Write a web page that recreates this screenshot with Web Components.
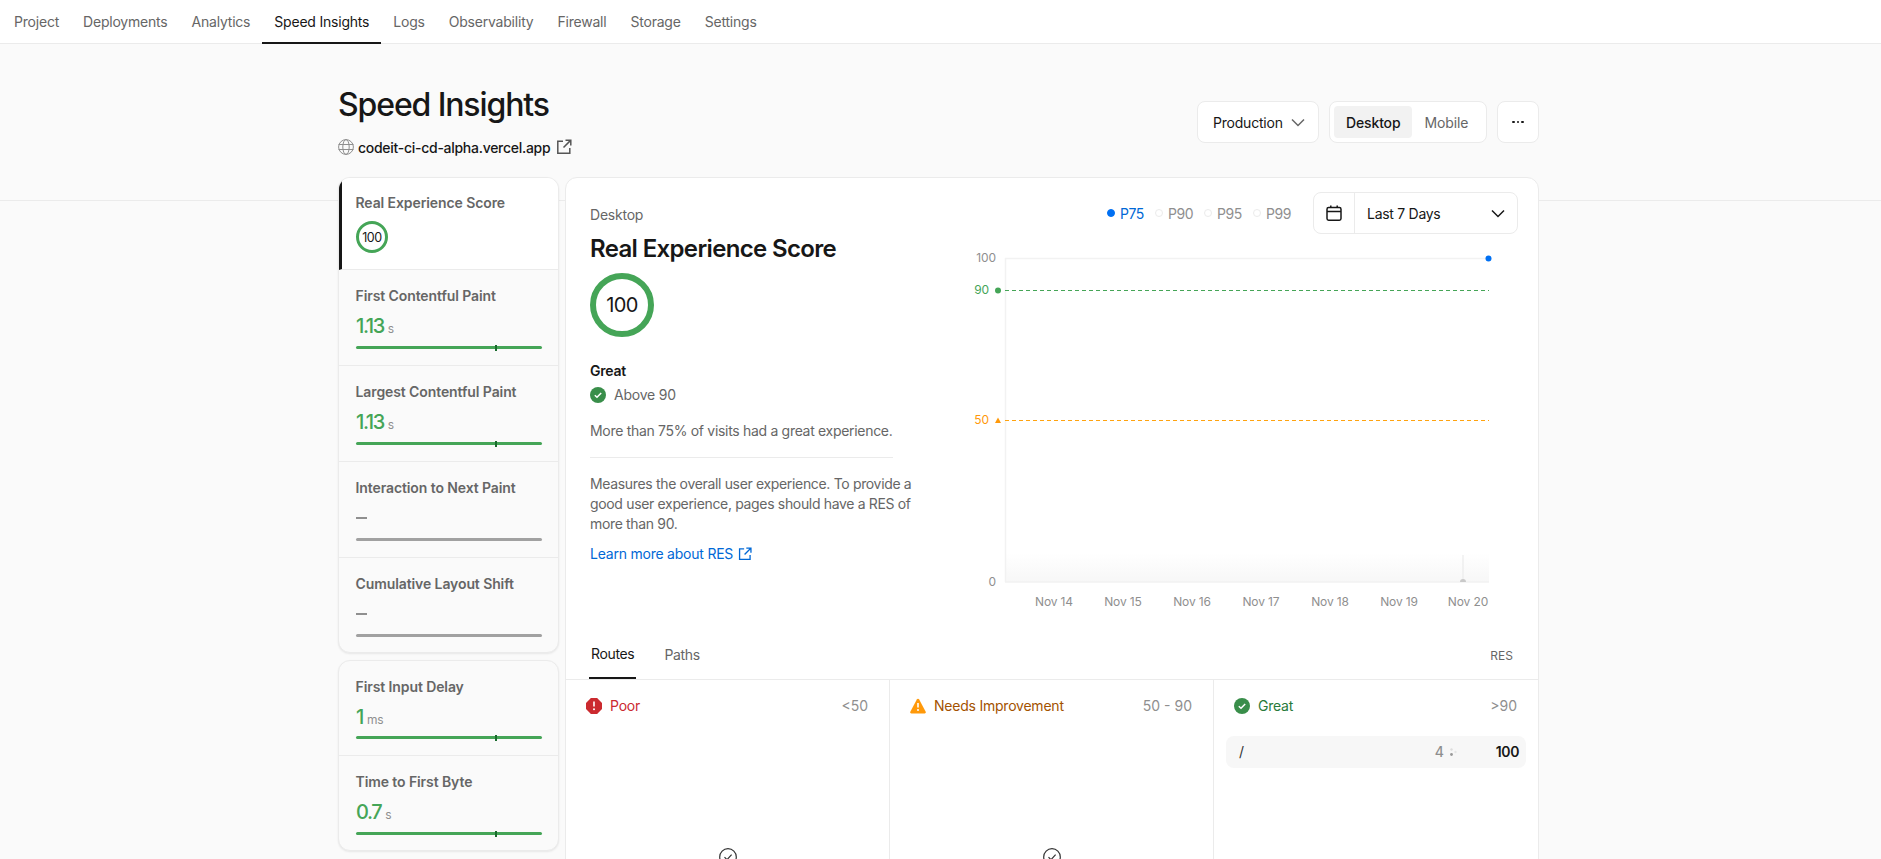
<!DOCTYPE html>
<html lang="en">
<head>
<meta charset="utf-8">
<title>Speed Insights</title>
<style>
  html, body { margin: 0; height: 859px; overflow: hidden; background: #fafafa; }
  body { font-family: Inter, "Liberation Sans", sans-serif; font-size: 14px; color: #171717; letter-spacing: -0.01em; }
</style>
</head>
<body>
<app-nav></app-nav>
<page-head></page-head>
<div id="content" style="display:flex;gap:6px;align-items:flex-start;margin:-24px 342px 0 338px">
  <metric-list>
    <metric-group>
      <metric-item label="Real Experience Score" score="100" active></metric-item>
      <metric-item label="First Contentful Paint" value="1.13" unit="s"></metric-item>
      <metric-item label="Largest Contentful Paint" value="1.13" unit="s"></metric-item>
      <metric-item label="Interaction to Next Paint"></metric-item>
      <metric-item label="Cumulative Layout Shift"></metric-item>
    </metric-group>
    <metric-group>
      <metric-item label="First Input Delay" value="1" unit="ms"></metric-item>
      <metric-item label="Time to First Byte" value="0.7" unit="s"></metric-item>
    </metric-group>
  </metric-list>
  <main-panel></main-panel>
</div>

<script>
const icons = {
  chevron: `<svg width="16" height="16" viewBox="0 0 16 16" fill="none" stroke="currentColor" stroke-width="1.5"><path d="M2 5.5l6 6 6-6"/></svg>`,
  external: `<svg width="16" height="16" viewBox="0 0 16 16" fill="none" stroke="currentColor" stroke-width="1.5"><path d="M7 2.2H1.8v12h12V9"/><path d="M9.5 1.2h5.3v5.3M14.6 1.4L7.5 8.5"/></svg>`,
  globe: `<svg width="16" height="16" viewBox="0 0 16 16" fill="none" stroke="#8f8f8f" stroke-width="1"><circle cx="8" cy="8" r="7.4"/><ellipse cx="8" cy="8" rx="3.2" ry="7.4"/><path d="M.6 5.5h14.8M.6 10.5h14.8"/></svg>`,
  calendar: `<svg width="16" height="16" viewBox="0 0 16 16" fill="none" stroke="currentColor" stroke-width="1.5"><rect x="1" y="2.6" width="14" height="12.6" rx="1.6"/><path d="M1 6.6h14M4.8 .4v2.4M11.2 .4v2.4"/></svg>`,
  great: `<svg width="16" height="16" viewBox="0 0 16 16"><circle cx="8" cy="8" r="8" fill="#398e4a"/><path d="M4.8 8.2l2.2 2.1 4.2-4.3" fill="none" stroke="#fff" stroke-width="1.5"/></svg>`,
  poor: `<svg width="16" height="16" viewBox="0 0 16 16"><path d="M4.9 0h6.2L16 4.9v6.2L11.1 16H4.9L0 11.1V4.9z" fill="#cb2a2f"/><path d="M8 3.6v5" stroke="#fff" stroke-width="1.6"/><circle cx="8" cy="11.3" r="1" fill="#fff"/></svg>`,
  warn: `<svg width="16" height="16" viewBox="0 0 16 16"><path d="M8 .8c.5 0 .9.3 1.2.8l6.5 12.2c.4.8-.1 1.6-1 1.6H1.3c-.9 0-1.4-.8-1-1.6L6.8 1.6C7.1 1.1 7.5.8 8 .8z" fill="#ff990a"/><path d="M8 5v4.6" stroke="#fff" stroke-width="1.6"/><circle cx="8" cy="12" r="1" fill="#fff"/></svg>`,
  checkOutline: `<svg width="18" height="18" viewBox="0 0 18 18" fill="none" stroke="#333" stroke-width="1.2"><circle cx="9" cy="9" r="8.3"/><path d="M5.5 9.2l2.5 2.5 4.6-5"/></svg>`,
};

// every element here just has a fixed shadow template
function simpleElement(name, html) {
  const tpl = document.createElement('template');
  tpl.innerHTML = html;
  customElements.define(name, class extends HTMLElement {
    connectedCallback() {
      if (this.shadowRoot) return;
      this.attachShadow({ mode: 'open' }).appendChild(tpl.content.cloneNode(true));
    }
  });
}

const navItems = ['Project', 'Deployments', 'Analytics', 'Speed Insights', 'Logs', 'Observability', 'Firewall', 'Storage', 'Settings'];

simpleElement('app-nav', `
  <style>
    :host { display: flex; height: 43px; background: #fff; border-bottom: 1px solid #ebebeb; padding-left: 2px; font-size: 14px; letter-spacing: -0.015em; }
    a { display: flex; align-items: center; padding: 0 12px 1px; color: #666; box-sizing: border-box; height: 44px; }
    a.active { color: #171717; border-bottom: 2px solid #171717; padding-bottom: 0; }
  </style>
  ${navItems.map((n) => `<a class="${n === 'Speed Insights' ? 'active' : ''}">${n}</a>`).join('')}
`);

simpleElement('page-head', `
  <style>
    :host { display: flex; justify-content: space-between; height: 157px; box-sizing: border-box; border-bottom: 1px solid #ebebeb; padding: 41px 342px 0 338px; }
    h1 { margin: 0; font-size: 32px; line-height: 40px; font-weight: 500; letter-spacing: -0.035em; color: #171717; }
    .site { display: flex; align-items: center; gap: 4px; margin-top: 12px; font-weight: 500; font-size: 14px; height: 20px; letter-spacing: -0.02em; }
    .site .ext { display: flex; margin-left: 2px; color: #555; }
    .tools { display: flex; gap: 10px; margin-top: 16px; height: 42px; }
    .box { display: flex; align-items: center; background: #fff; border: 1px solid #ebebeb; border-radius: 8px; box-sizing: border-box; height: 42px; }
    .prod { width: 122px; padding-left: 15px; gap: 7px; letter-spacing: -0.015em; }
    .prod svg { color: #666; }
    .seg { width: 158px; padding: 4px; }
    .seg span { display: flex; align-items: center; height: 32px; padding: 0 12px; color: #666; }
    .seg .on { background: #f2f2f2; border-radius: 4px; color: #171717; font-weight: 500; }
    .more { width: 42px; justify-content: center; gap: 2px; }
    .more i { width: 2.5px; height: 2.5px; border-radius: 50%; background: #171717; }
  </style>
  <div>
    <h1>Speed Insights</h1>
    <div class="site">${icons.globe}<span>codeit-ci-cd-alpha.vercel.app</span><span class="ext">${icons.external}</span></div>
  </div>
  <div class="tools">
    <div class="box prod"><span>Production</span>${icons.chevron}</div>
    <div class="box seg"><span class="on">Desktop</span><span>Mobile</span></div>
    <div class="box more"><i></i><i></i><i></i></div>
  </div>
`);

simpleElement('metric-list', `
  <style>:host { display: flex; flex-direction: column; gap: 7px; width: 221px; flex: none; }</style>
  <slot></slot>
`);

simpleElement('metric-group', `
  <style>
    :host { display: block; background: #fafafa; border: 1px solid #ebebeb; border-radius: 12px; overflow: hidden; box-shadow: 0 1px 2px rgba(0,0,0,.08); }
    ::slotted(metric-item:not(:last-child)) { border-bottom: 1px solid #ebebeb; }
  </style>
  <slot></slot>
`);

class MetricItem extends HTMLElement {
  connectedCallback() {
    const label = this.getAttribute('label');
    const value = this.getAttribute('value');
    const unit = this.getAttribute('unit');
    const score = this.getAttribute('score');
    let body;
    if (score) {
      body = `<div class="ring">${score}</div>`;
    } else {
      const num = value
        ? `<span class="num">${value}</span><span class="unit">${unit}</span>`
        : `<span class="dash"></span>`;
      body = `<div class="val">${num}</div><div class="bar ${value ? 'good' : ''}">${value ? '<i></i>' : ''}</div>`;
    }
    this.attachShadow({ mode: 'open' }).innerHTML = `
      <style>
        :host { display: block; box-sizing: border-box; height: 96px; padding: 16px 16px 0 17px; }
        :host(:first-child) { height: 95px; }
        :host(:first-child) .bar { margin-top: 5px; }
        :host(:last-child) { height: 94px; }
        :host([active]) { height: 92px; background: #fff; border-left: 3px solid #171717; padding-left: 14px; padding-top: 15px; }
        .label { font-weight: 600; color: #666; line-height: 20px; font-size: 14px; letter-spacing: -0.007em; margin-left: -0.5px; }
        .ring { width: 32px; height: 32px; margin-top: 8px; box-sizing: border-box; border: 3px solid #45a557; border-radius: 50%; display: flex; align-items: center; justify-content: center; font-size: 12.5px; letter-spacing: -0.03em; color: #171717; }
        .val { display: flex; align-items: baseline; height: 28px; margin-top: 6px; line-height: 28px; }
        .num { font-size: 20px; color: #45a557; letter-spacing: -0.07em; font-weight: 500; }
        .unit { font-size: 12px; color: #8f8f8f; margin-left: 4px; }
        .dash { width: 11px; height: 2px; background: #8f8f8f; margin-top: 13px; }
        .bar { position: relative; width: 186px; height: 3px; border-radius: 2px; margin-top: 6px; background: #a1a1a1; }
        .bar.good { background: #45a557; }
        .bar i { position: absolute; left: 139px; top: -1px; width: 2px; height: 6px; background: #1a6b2d; }
      </style>
      <div class="label">${label}</div>
      ${body}`;
  }
}
customElements.define('metric-item', MetricItem);

simpleElement('score-panel', `
  <style>
    :host { display: block; width: 330px; padding: 27px 0 0 24px; color: #666; font-size: 14px; line-height: 20px; flex: none; letter-spacing: -0.016em; }
    .dev { height: 20px; color: #666; }
    h2 { margin: 8px 0 0; font-size: 24px; line-height: 32px; font-weight: 600; color: #171717; letter-spacing: -0.027em; }
    .ring { width: 64px; height: 64px; margin-top: 8px; box-sizing: border-box; border: 6px solid #45a557; border-radius: 50%; display: flex; align-items: center; justify-content: center; font-size: 20px; color: #171717; letter-spacing: -0.03em; }
    .great { margin-top: 24px; font-weight: 600; color: #171717; }
    .above { display: flex; align-items: center; gap: 8px; margin-top: 4px; }
    p { margin: 16px 0 0; white-space: nowrap; letter-spacing: -0.022em; }
    hr { border: 0; border-top: 1px solid #ebebeb; margin: 16px 0 0; width: 303px; }
    .desc { margin-top: 16px; width: 330px; white-space: normal; letter-spacing: -0.024em; }
    .learn { display: flex; align-items: center; gap: 5px; margin-top: 10px; color: #0068d6; }
    .learn svg { width: 14px; height: 14px; }
  </style>
  <div class="dev">Desktop</div>
  <h2>Real Experience Score</h2>
  <div class="ring">100</div>
  <div class="great">Great</div>
  <div class="above">${icons.great}<span>Above 90</span></div>
  <p>More than 75% of visits had a great experience.</p>
  <hr>
  <p class="desc">Measures the overall user experience. To provide a good user experience, pages should have a RES of more than 90.</p>
  <div class="learn"><span>Learn more about RES</span>${icons.external}</div>
`);

simpleElement('range-bar', `
  <style>
    :host { display: flex; justify-content: flex-end; align-items: center; gap: 22px; padding: 14px 20px 0 0; font-size: 14px; }
    .pcts { display: flex; gap: 11px; color: #8f8f8f; }
    .pcts span { display: flex; align-items: center; gap: 5px; letter-spacing: -0.03em; }
    .pcts i { width: 8px; height: 8px; border-radius: 50%; border: 1px solid #ebebeb; box-sizing: border-box; }
    .pcts .on { color: #0068d6; }
    .pcts .on i { background: #0070f3; border-color: #0070f3; }
    .picker { display: flex; align-items: center; width: 205px; height: 42px; box-sizing: border-box; border: 1px solid #ebebeb; border-radius: 8px; color: #171717; letter-spacing: -0.02em; }
    .cal { display: flex; justify-content: center; align-items: center; width: 40px; height: 40px; border-right: 1px solid #ebebeb; }
    .txt { flex: 1; padding-left: 12px; }
    .chev { display: flex; margin-right: 11px; }
  </style>
  <div class="pcts">
    <span class="on"><i></i>P75</span><span><i></i>P90</span><span><i></i>P95</span><span><i></i>P99</span>
  </div>
  <div class="picker"><div class="cal">${icons.calendar}</div><div class="txt">Last 7 Days</div><div class="chev">${icons.chevron}</div></div>
`);

const days = [14, 15, 16, 17, 18, 19, 20];

// chart coordinates are the picture itself: origin is at x=964, y=240 on the page
simpleElement('score-chart', `
  <style>
    :host { display: block; height: 380px; margin-top: 6px; }
    svg { display: block; font-family: Inter, "Liberation Sans", sans-serif; font-size: 12px; letter-spacing: -0.01em; }
  </style>
  <svg width="540" height="380" viewBox="0 0 540 380">
    <defs><linearGradient id="fade" x1="0" y1="0" x2="0" y2="1"><stop offset="0" stop-color="#fff"/><stop offset="1" stop-color="#f7f7f7"/></linearGradient></defs>
    <rect x="40" y="313" width="484" height="29" fill="url(#fade)"/>
    <path d="M40.5 342V18.5H524" fill="none" stroke="#f2f2f2" stroke-width="1.5"/>
    <path d="M40 342H524" stroke="#f2f2f2" stroke-width="1.5"/>
    <path d="M40 50.5H524" stroke="#45a557" stroke-dasharray="4 3"/>
    <path d="M40 180.5H524" stroke="#ffa30f" stroke-dasharray="4 3"/>
    <circle cx="523.5" cy="18.5" r="3" fill="#0070f3"/>
    <path d="M498 315v27" stroke="#ebebeb" stroke-width="1.2"/>
    <path d="M495 342c0-2 1-3 3-3s3 1 3 3z" fill="#c9c9c9"/>
    <text x="31" y="22" text-anchor="end" fill="#8f8f8f">100</text>
    <text x="24" y="54" text-anchor="end" fill="#45a557">90</text>
    <circle cx="33" cy="50.5" r="3" fill="#45a557"/>
    <text x="24" y="184" text-anchor="end" fill="#ff990a">50</text>
    <path d="M33 177.5l3 5.5h-6z" fill="#ff990a"/>
    <text x="31" y="346" text-anchor="end" fill="#8f8f8f">0</text>
    ${days.map((d, i) => `<text x="${89 + i * 69}" y="366" text-anchor="middle" fill="#8f8f8f">Nov ${d}</text>`).join('')}
  </svg>
`);

simpleElement('route-tabs', `
  <style>
    :host { display: flex; align-items: flex-end; height: 50px; box-sizing: border-box; padding-left: 23px; border-bottom: 1px solid #ebebeb; font-size: 14px; }
    a { display: flex; align-items: center; height: 49px; box-sizing: border-box; padding: 0 2px; color: #666; margin-right: 26px; letter-spacing: -0.025em; }
    a.active { color: #171717; border-bottom: 2px solid #171717; }
    .res { align-self: center; margin: 2px 25px 0 auto; font-size: 12px; color: #666; font-weight: 400; letter-spacing: 0; }
  </style>
  <a class="active">Routes</a><a>Paths</a><span class="res">RES</span>
`);

class RouteColumn extends HTMLElement {
  connectedCallback() {
    this.attachShadow({ mode: 'open' }).innerHTML = `
      <style>
        :host { display: block; position: relative; height: 180px; box-sizing: border-box; padding: 14px 13px 0; border-right: 1px solid #ebebeb; font-size: 14px; line-height: 20px; }
        :host(:last-child) { border-right: 0; }
        .head { display: flex; align-items: center; gap: 8px; padding: 0 8px 0 7px; height: 24px; letter-spacing: -0.016em; }
        .name { flex: 1; color: var(--col); }
        .range { color: #8f8f8f; letter-spacing: 0; }
        .empty { position: absolute; left: 50%; top: 168px; margin-left: -9px; }
        ::slotted(*) { margin-top: 18px; }
      </style>
      <div class="head">${icons[this.getAttribute('icon')]}<span class="name">${this.getAttribute('name')}</span><span class="range">${this.getAttribute('range')}</span></div>
      <slot></slot>
      ${this.hasAttribute('empty') ? `<div class="empty">${icons.checkOutline}</div>` : ''}`;
  }
}
customElements.define('route-column', RouteColumn);

simpleElement('route-row', `
  <style>
    :host { display: flex; align-items: center; height: 32px; margin: 0 -1px; padding: 0 7px 0 13px; background: #f7f7f7; border-radius: 8px; font-size: 14px; }
    .path { flex: 1; color: #333; }
    .count { color: #8f8f8f; font-weight: 500; }
    svg { margin: 0 39px 0 6px; }
    .score { color: #171717; font-weight: 600; letter-spacing: -0.03em; }
  </style>
  <span class="path">/</span>
  <span class="count">4</span>
  <svg width="7" height="8" viewBox="0 0 7 8"><circle cx="1.5" cy="1.5" r="1.2" fill="#ddd"/><circle cx="1.5" cy="6.5" r="1.4" fill="#999"/><circle cx="5.5" cy="4" r="1.2" fill="#e6e6e6"/></svg>
  <span class="score">100</span>
`);

simpleElement('main-panel', `
  <style>
    :host { display: block; flex: 1; height: 700px; background: #fff; border: 1px solid #ebebeb; border-radius: 12px 12px 0 0; box-sizing: border-box; overflow: hidden; }
    .top { display: flex; height: 452px; justify-content: space-between; }
    .right { width: 590px; flex: none; }
    .chartwrap { display: flex; justify-content: flex-end; padding-right: 33px; }
    .cols { display: grid; grid-template-columns: 324px 324px 1fr; }
  </style>
  <div class="top">
    <score-panel></score-panel>
    <div class="right">
      <range-bar></range-bar>
      <div class="chartwrap"><score-chart></score-chart></div>
    </div>
  </div>
  <route-tabs></route-tabs>
  <div class="cols">
    <route-column icon="poor" name="Poor" range="&lt;50" style="--col:#cb2a2f" empty></route-column>
    <route-column icon="warn" name="Needs Improvement" range="50 - 90" style="--col:#a35200" empty></route-column>
    <route-column icon="great" name="Great" range="&gt;90" style="--col:#297a3a"><route-row></route-row></route-column>
  </div>
`);
</script>
</body>
</html>
